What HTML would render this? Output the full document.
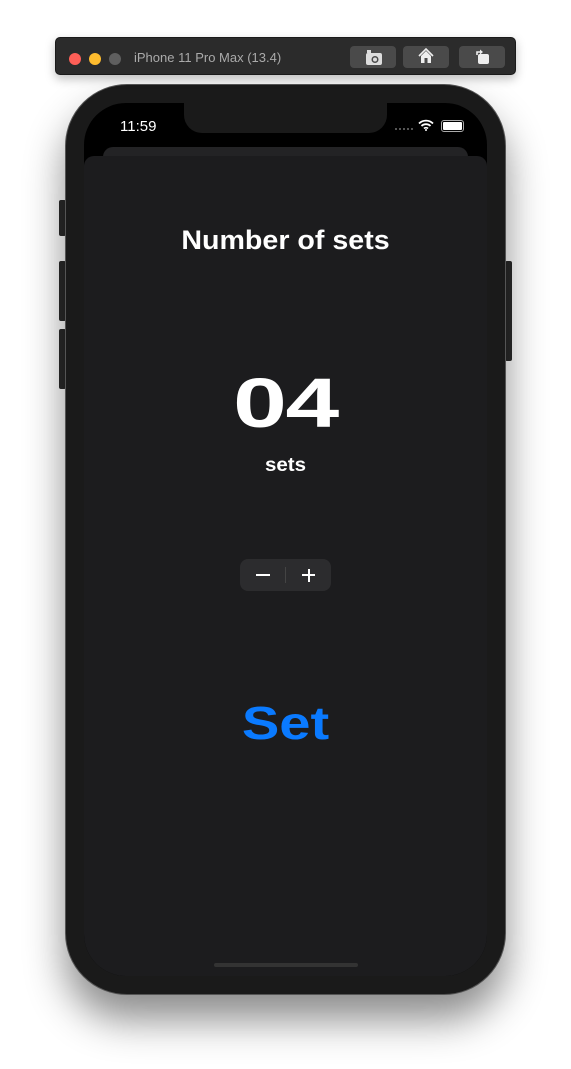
<!DOCTYPE html>
<html><head><meta charset="utf-8"><style>
*{margin:0;padding:0;box-sizing:border-box}
body{width:571px;height:1069px;background:#fff;position:relative;overflow:hidden;font-family:"Liberation Sans",Helvetica,Arial,sans-serif}
.a{position:absolute}
.bar{left:55px;top:37px;width:461px;height:38px;background:#2b2b2b;border-radius:5px;border:1px solid #1a1a1a;box-shadow:0 4px 10px rgba(0,0,0,.25)}
.dot{top:15px;width:12px;height:12px;border-radius:50%}
.btn{top:8px;width:46px;height:22px;background:#4a4a4a;border-radius:4px}
.side{background:#2a2a2a;border-radius:2px;width:7px}
.phone{left:65px;top:84px;width:441px;height:911px;border-radius:62px;background:#1a1a1a;border:1px solid #555;box-shadow:0 25px 40px rgba(0,0,0,.45)}
.screen{left:84px;top:103px;width:403px;height:873px;border-radius:42px;background:#000;overflow:hidden}
.c{left:0;width:403px;text-align:center;color:#fff;font-weight:bold}
</style></head><body>
<div class="a side" style="left:59px;top:200px;height:36px"></div>
<div class="a side" style="left:59px;top:261px;height:60px"></div>
<div class="a side" style="left:59px;top:329px;height:60px"></div>
<div class="a side" style="left:505px;top:261px;height:100px"></div>
<div class="a phone"></div>
<div class="a screen">
  <div class="a" style="left:100px;top:0;width:203px;height:30px;background:#1a1a1a;border-radius:0 0 18px 18px"></div>
  <div class="a" style="left:36px;top:15px;color:#fff;font-size:15px">11:59</div>
  <div class="a" style="left:311px;top:25px;width:18px;height:3px;border-top:2px dotted #555"></div>
  <svg class="a" style="left:334px;top:16px" width="16" height="12" viewBox="0 0 16 12"><path d="M1 4.5a10 10 0 0 1 14 0M3.5 7a6.5 6.5 0 0 1 9 0M6 9.5a3 3 0 0 1 4 0" stroke="#fff" stroke-width="1.8" fill="none"/><circle cx="8" cy="11" r="1" fill="#fff"/></svg>
  <div class="a" style="left:357px;top:17px;width:23px;height:12px;border:1px solid #aaa;border-radius:3px;padding:1px"><div style="width:100%;height:100%;background:#fff;border-radius:1px"></div></div>
  <div class="a" style="left:19px;top:44px;width:365px;height:40px;background:#232325;border-radius:10px"></div>
  <div class="a" style="left:0;top:53px;width:403px;height:840px;background:#1c1c1e;border-radius:10px 10px 42px 42px"></div>
  <div class="a c" style="top:122px;font-size:27px;transform:scaleX(1.06)">Number of sets</div>
  <div class="a c" style="top:260px;font-size:70px;letter-spacing:-1px;transform:scaleX(1.38)">04</div>
  <div class="a c" style="top:352px;font-size:19px;transform:scaleX(1.08)">sets</div>
  <div class="a" style="left:156px;top:456px;width:91px;height:32px;background:#2c2c2e;border-radius:8px">
    <div class="a" style="left:16px;top:15px;width:14px;height:2px;background:#fff"></div>
    <div class="a" style="left:45px;top:8px;width:1px;height:16px;background:#444"></div>
    <div class="a" style="left:62px;top:15px;width:13px;height:2px;background:#fff"></div>
    <div class="a" style="left:67.5px;top:9.5px;width:2px;height:13px;background:#fff"></div>
  </div>
  <div class="a c" style="top:593px;color:#0a7aff;font-size:46px;transform:scaleX(1.22)">Set</div>
  <div class="a" style="left:130px;top:860px;width:144px;height:4px;background:#333;border-radius:2px"></div>
</div>
<div class="a bar">
  <div class="a dot" style="left:13px;background:#fe5f57"></div>
  <div class="a dot" style="left:33px;background:#febc2e"></div>
  <div class="a dot" style="left:53px;background:#5f5f5f"></div>
  <div class="a" style="left:78px;top:12px;color:#aaa;font-size:13px">iPhone 11 Pro Max (13.4)</div>
  <div class="a btn" style="left:294px"></div>
  <div class="a btn" style="left:347px"></div>
  <div class="a btn" style="left:403px"></div>
  <svg class="a" style="left:309px;top:11px" width="18" height="17" viewBox="0 0 18 17"><rect x="1" y="4" width="16" height="12" rx="2" fill="#ddd"/><circle cx="10" cy="10.5" r="3.5" fill="#4a4a4a"/><circle cx="10" cy="10.5" r="2" fill="#ddd"/><rect x="2" y="1" width="4" height="3" fill="#ddd"/></svg>
  <svg class="a" style="left:362px;top:10px" width="16" height="16" viewBox="0 0 16 16"><path d="M1 8L8 1l7 7" stroke="#eee" stroke-width="1.6" fill="none"/><path d="M3 8v7h10V8L8 3z" fill="#eee"/><rect x="6.5" y="10" width="3" height="5" fill="#4a4a4a"/></svg>
  <svg class="a" style="left:418px;top:10px" width="16" height="17" viewBox="0 0 16 17"><rect x="4" y="6" width="11" height="10" rx="2" fill="#eee"/><path d="M3 7V4h4" stroke="#eee" stroke-width="1.6" fill="none"/><path d="M6 1.5l3 2.5-3 2.5z" fill="#eee"/></svg>
</div>
</body></html>
